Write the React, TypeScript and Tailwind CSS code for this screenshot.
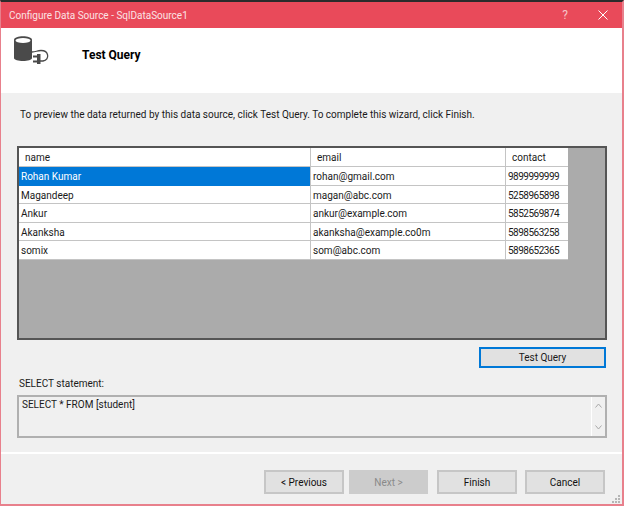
const rows = [
  { name: "Rohan Kumar", email: "rohan@gmail.com", contact: "9899999999" },
  { name: "Magandeep", email: "magan@abc.com", contact: "5258965898" },
  { name: "Ankur", email: "ankur@example.com", contact: "5852569874" },
  { name: "Akanksha", email: "akanksha@example.co0m", contact: "5898563258" },
  { name: "somix", email: "som@abc.com", contact: "5898652365" },
];

const DbIcon = () => (
  <svg width="38" height="32" viewBox="0 0 38 32" className="shrink-0">
    <path d="M1 4c0-5 18-5 18 0v18c0 4-18 4-18 0z" fill="#4a4a4a" />
    <ellipse cx="10" cy="4.500" rx="7.500" ry="2.600" fill="#fff" />
    <path d="M19 16c4 0 5-1.500 9-1.500 8 0 9 9 2 10.500h-3" fill="none" stroke="#4a4a4a" strokeWidth="1.300" />
    <path d="M24 18h3.500v10H24z" fill="#4a4a4a" />
    <path d="M20 20.500h4M20 25.500h4" stroke="#4a4a4a" strokeWidth="2" />
  </svg>
);

const WizardButton = ({ label, disabled, narrow }: { label: string; disabled?: boolean; narrow?: boolean }) => (
  <button
    className={`h-[24px] border-2 ${narrow ? "w-[79px]" : "w-[80px]"} ${
      disabled ? "bg-[#cccccc] border-[#cccccc] text-[#8a8a8a]" : "bg-[#e1e1e1] border-[#c6c6c6] text-[#111]"
    }`}
  >
    {label}
  </button>
);

export default function App() {
  return (
    <div className="w-[624px] h-[506px] overflow-hidden flex flex-col bg-[#f0f0f0] border-t-2 border-t-[#2b2b2b] border-l border-l-[#e8808c] border-r-2 border-r-[#e8808c] border-b-2 border-b-[#e8808c] text-[10px] text-[#1a1a1a] font-['Roboto','Noto_Sans',sans-serif]">
      <div className="h-[26px] shrink-0 flex items-center justify-between bg-[#e94a5a] text-[#fbe3e5] pl-[8px]">
        <span>Configure Data Source - SqlDataSource1</span>
        <div className="flex items-center gap-[30px] pr-[14px]">
          <span className="text-[#f5c4c9] text-[12px]">?</span>
          <svg width="10" height="10" viewBox="0 0 10 10">
            <path d="M.5.5l9 9M9.500.5l-9 9" stroke="#fff" strokeWidth="1" />
          </svg>
        </div>
      </div>

      <div className="h-[65px] shrink-0 bg-white flex items-start pl-[12px] pt-[8px]">
        <DbIcon />
        <span className="ml-[31px] mt-[10px] text-[12px] font-bold text-black">Test Query</span>
      </div>

      <div className="h-[361px] shrink-0 flex flex-col px-[16px] border-b-2 border-b-white">
        <p className="mt-[14px] ml-[3px] h-[16px] leading-[16px] whitespace-nowrap">
          To preview the data returned by this data source, click Test Query. To complete this wizard, click Finish.
        </p>

        <div className="mt-[23px] h-[194px] w-[590px] border-2 border-[#555555] bg-[#ababab]">
          <div className="w-[549px] bg-white">
            <div className="grid grid-cols-[292px_195px_62px] h-[19px] leading-[19px] border-b border-b-[#c4c4c4]">
              <span className="pl-[6px] border-r border-r-[#c4c4c4]">name</span>
              <span className="pl-[6px] border-r border-r-[#c4c4c4]">email</span>
              <span className="pl-[6px]">contact</span>
            </div>
            {rows.map((row, i) => (
              <div
                key={row.name}
                className="grid grid-cols-[292px_195px_62px] h-[18.500px] leading-[19px] border-b border-b-[#c4c4c4]"
              >
                <span className={`pl-[2px] border-r border-r-[#c4c4c4] ${i === 0 ? "bg-[#0078d7] text-white" : ""}`}>
                  {row.name}
                </span>
                <span className="pl-[2px] border-r border-r-[#c4c4c4]">{row.email}</span>
                <span className="pl-[2px] tracking-[-0.500px]">{row.contact}</span>
              </div>
            ))}
          </div>
        </div>

        <div className="mt-[7px] flex justify-end">
          <button className="w-[127px] h-[21px] bg-[#e1e1e1] border-2 border-[#0078d7]">Test Query</button>
        </div>

        <p className="mt-[8px] ml-[2px] h-[16px] leading-[16px]">SELECT statement:</p>

        <div className="mt-[3px] h-[43px] w-[590px] flex border-2 border-[#b0b0b0] bg-[#f0f0f0]">
          <span className="flex-1 pl-[3px] leading-[16px]">SELECT * FROM [student]</span>
          <div className="w-[14px] bg-[#f0f0f0] border-l border-l-white flex flex-col items-center justify-between py-[6px]">
            <svg width="7" height="5" viewBox="0 0 7 5">
              <path d="M.5 4.500l3-3.500 3 3.500" fill="none" stroke="#a8a8a8" />
            </svg>
            <svg width="7" height="5" viewBox="0 0 7 5">
              <path d="M.5.5l3 3.500 3-3.500" fill="none" stroke="#a8a8a8" />
            </svg>
          </div>
        </div>
      </div>

      <div className="flex-1 relative flex items-start justify-end pt-[16px] pr-[17px]">
        <div className="flex">
          <WizardButton label="< Previous" />
          <span className="w-[5px]" />
          <WizardButton label="Next >" disabled narrow />
          <span className="w-[9px]" />
          <WizardButton label="Finish" />
          <span className="w-[8px]" />
          <WizardButton label="Cancel" />
        </div>
        <svg width="8" height="8" viewBox="0 0 8 8" className="absolute right-[2px] bottom-[1px]">
          <path d="M6 0h2v2H6zM3 3h2v2H3zM6 3h2v2H6zM0 6h2v2H0zM3 6h2v2H3zM6 6h2v2H6z" fill="#b5b5b5" />
        </svg>
      </div>
    </div>
  );
}
